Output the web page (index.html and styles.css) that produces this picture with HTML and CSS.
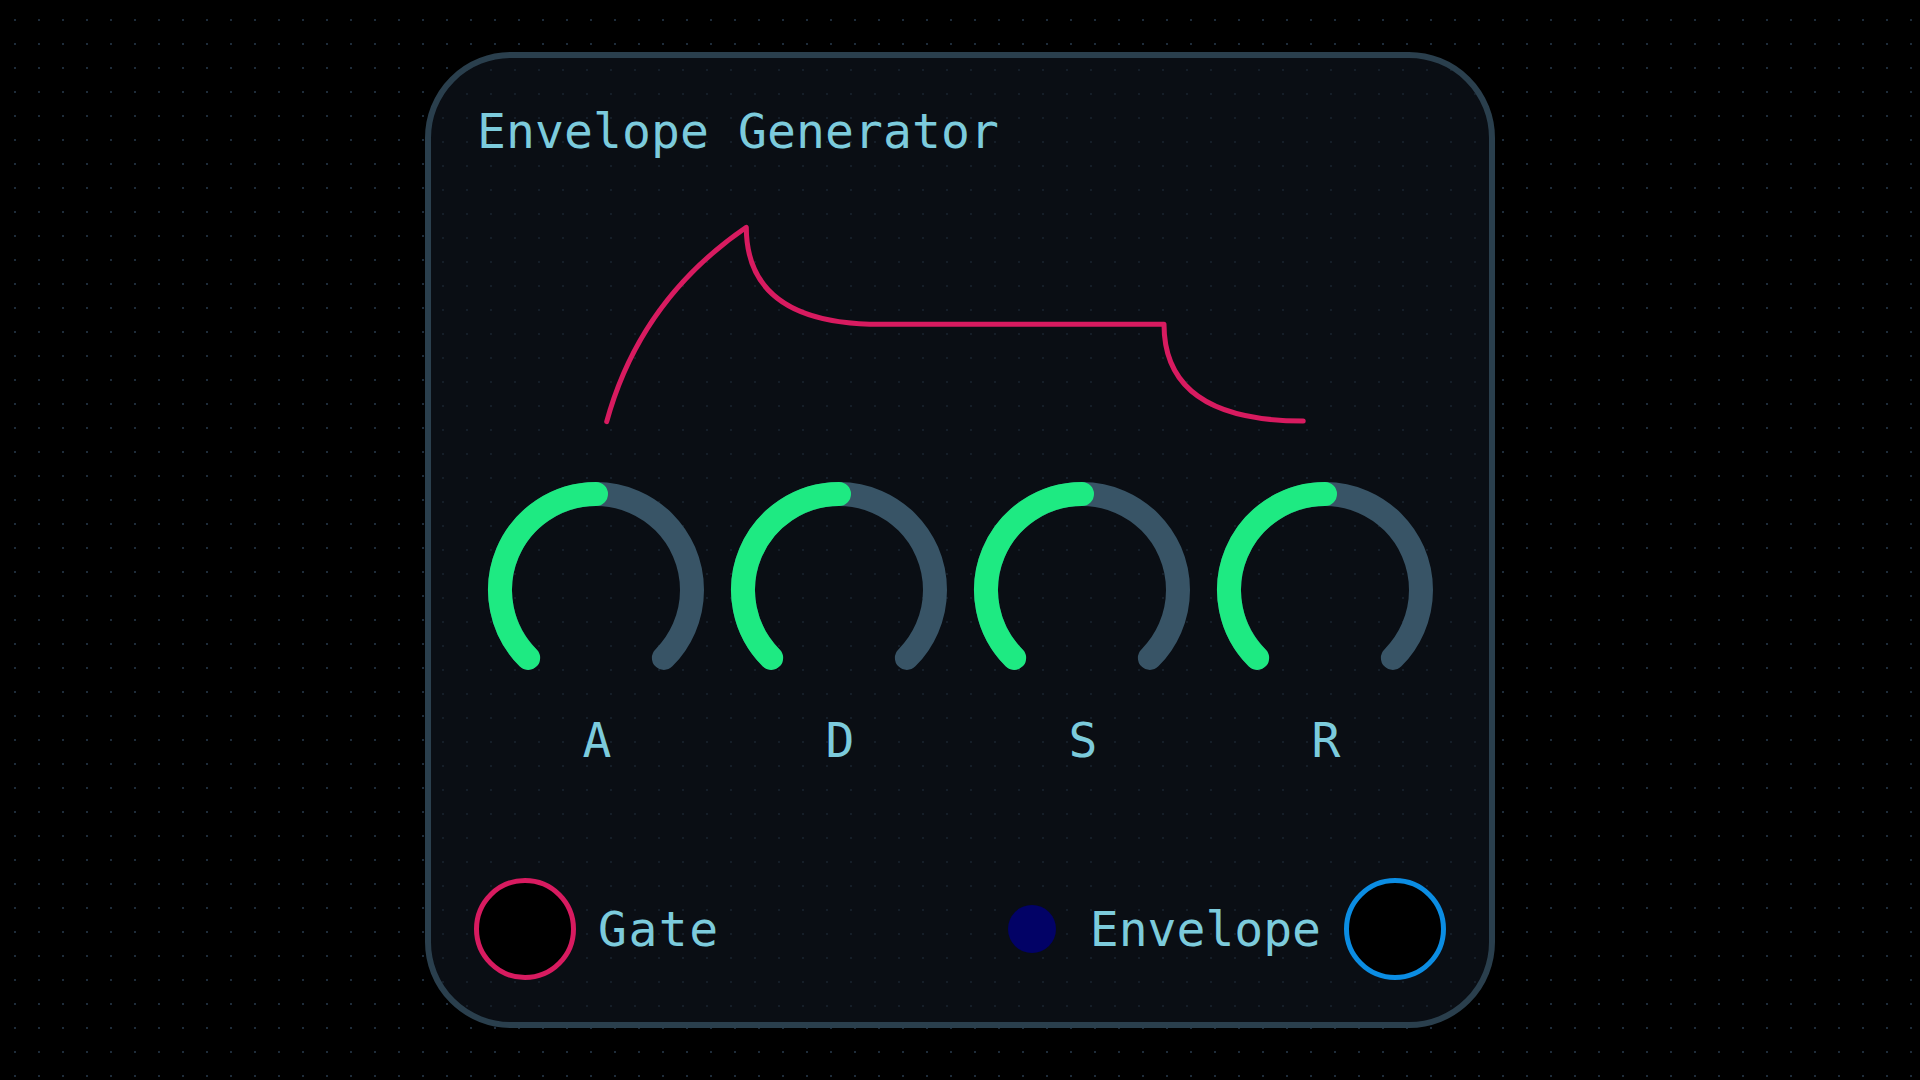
FILE: index.html
```html
<!DOCTYPE html>
<html lang="en">
<head>
<meta charset="utf-8">
<title>Envelope Generator</title>
<link rel="stylesheet" href="styles.css">
</head>
<body>
<main class="module">
  <h1 class="title">Envelope Generator</h1>
  <svg class="envelope" viewBox="0 0 972 321" width="972" height="321">
    <path d="M 132.7 262.7 Q 166 141 272.3 68.3 Q 272.3 165.3 406.5 165.3 L 690 165.3 Q 690 262 829.2 262" />
  </svg>
  <div class="knobs">
    <div class="knob">
      <svg viewBox="0 0 220 190" width="220" height="190">
        <path class="track" d="M 42.12 177.88 A 96 96 0 1 1 177.88 177.88" />
        <path class="value" d="M 42.12 177.88 A 96 96 0 0 1 110 14" />
      </svg>
      <span class="label">A</span>
    </div>
    <div class="knob">
      <svg viewBox="0 0 220 190" width="220" height="190">
        <path class="track" d="M 42.12 177.88 A 96 96 0 1 1 177.88 177.88" />
        <path class="value" d="M 42.12 177.88 A 96 96 0 0 1 110 14" />
      </svg>
      <span class="label">D</span>
    </div>
    <div class="knob">
      <svg viewBox="0 0 220 190" width="220" height="190">
        <path class="track" d="M 42.12 177.88 A 96 96 0 1 1 177.88 177.88" />
        <path class="value" d="M 42.12 177.88 A 96 96 0 0 1 110 14" />
      </svg>
      <span class="label">S</span>
    </div>
    <div class="knob">
      <svg viewBox="0 0 220 190" width="220" height="190">
        <path class="track" d="M 42.12 177.88 A 96 96 0 1 1 177.88 177.88" />
        <path class="value" d="M 42.12 177.88 A 96 96 0 0 1 110 14" />
      </svg>
      <span class="label">R</span>
    </div>
  </div>
  <div class="io">
    <div class="port">
      <span class="jack jack-in"></span>
      <span class="port-name port-name-in">Gate</span>
    </div>
    <div class="port">
      <span class="led"></span>
      <span class="port-name">Envelope</span>
      <span class="jack jack-out"></span>
    </div>
  </div>
</main>
</body>
</html>
```

FILE: styles.css
```css
* {
  box-sizing: border-box;
}

html, body {
  margin: 0;
  padding: 0;
}

body {
  width: 100vw;
  height: 100vh;
  background-color: #000;
  background-image: radial-gradient(circle, #1e2c3a 0.9px, transparent 1.5px);
  background-size: 24px 24px;
  background-position: 3px 8px;
  display: flex;
  align-items: center;
  justify-content: center;
  font-family: "DejaVu Sans Mono", "Liberation Mono", monospace;
  color: #7ccbdc;
}

.module {
  width: 1070px;
  border: 6px solid #2a3f4d;
  border-radius: 86px;
  background-color: #0a0e14;
  background-image: radial-gradient(circle, #151e28 0.9px, transparent 1.4px);
  background-size: 24px 24px;
  padding: 45px 43px 42px;
  display: flex;
  flex-direction: column;
}

.title {
  margin: 0;
  padding-left: 3px;
  font-size: 48px;
  font-weight: 400;
  line-height: 56px;
  letter-spacing: 0.1px;
  color: #7ccbdc;
}

.envelope {
  display: block;
  width: 972px;
  height: 321px;
}

.envelope path {
  fill: none;
  stroke: #d81b60;
  stroke-width: 5;
  stroke-linecap: round;
  stroke-linejoin: round;
}

.knobs {
  display: grid;
  grid-template-columns: repeat(4, 1fr);
}

.knob {
  display: flex;
  flex-direction: column;
  align-items: center;
  gap: 42px;
}

.knob svg {
  display: block;
  width: 220px;
  height: 190px;
}

.knob path {
  fill: none;
  stroke-width: 24;
  stroke-linecap: round;
}

.knob .track {
  stroke: #385466;
}

.knob .value {
  stroke: #1eea82;
}

.label {
  padding-left: 3px;
  font-size: 48px;
  line-height: 56px;
  color: #7ccbdc;
}

.io {
  margin-top: 110px;
  display: flex;
  justify-content: space-between;
  align-items: center;
}

.port {
  display: flex;
  align-items: center;
}

.jack {
  display: block;
  width: 102px;
  height: 102px;
  border-radius: 50%;
  background: #000;
  border: 5px solid;
}

.jack-in {
  border-color: #d81b60;
  margin-right: 22px;
}

.jack-out {
  border-color: #0b8de3;
  margin-left: 23px;
}

.led {
  display: block;
  width: 48px;
  height: 48px;
  border-radius: 50%;
  background: #020266;
  margin-right: 34px;
}

.port-name {
  font-size: 48px;
  line-height: 56px;
  color: #7ccbdc;
}

.port-name-in {
  letter-spacing: 1.5px;
}
```
